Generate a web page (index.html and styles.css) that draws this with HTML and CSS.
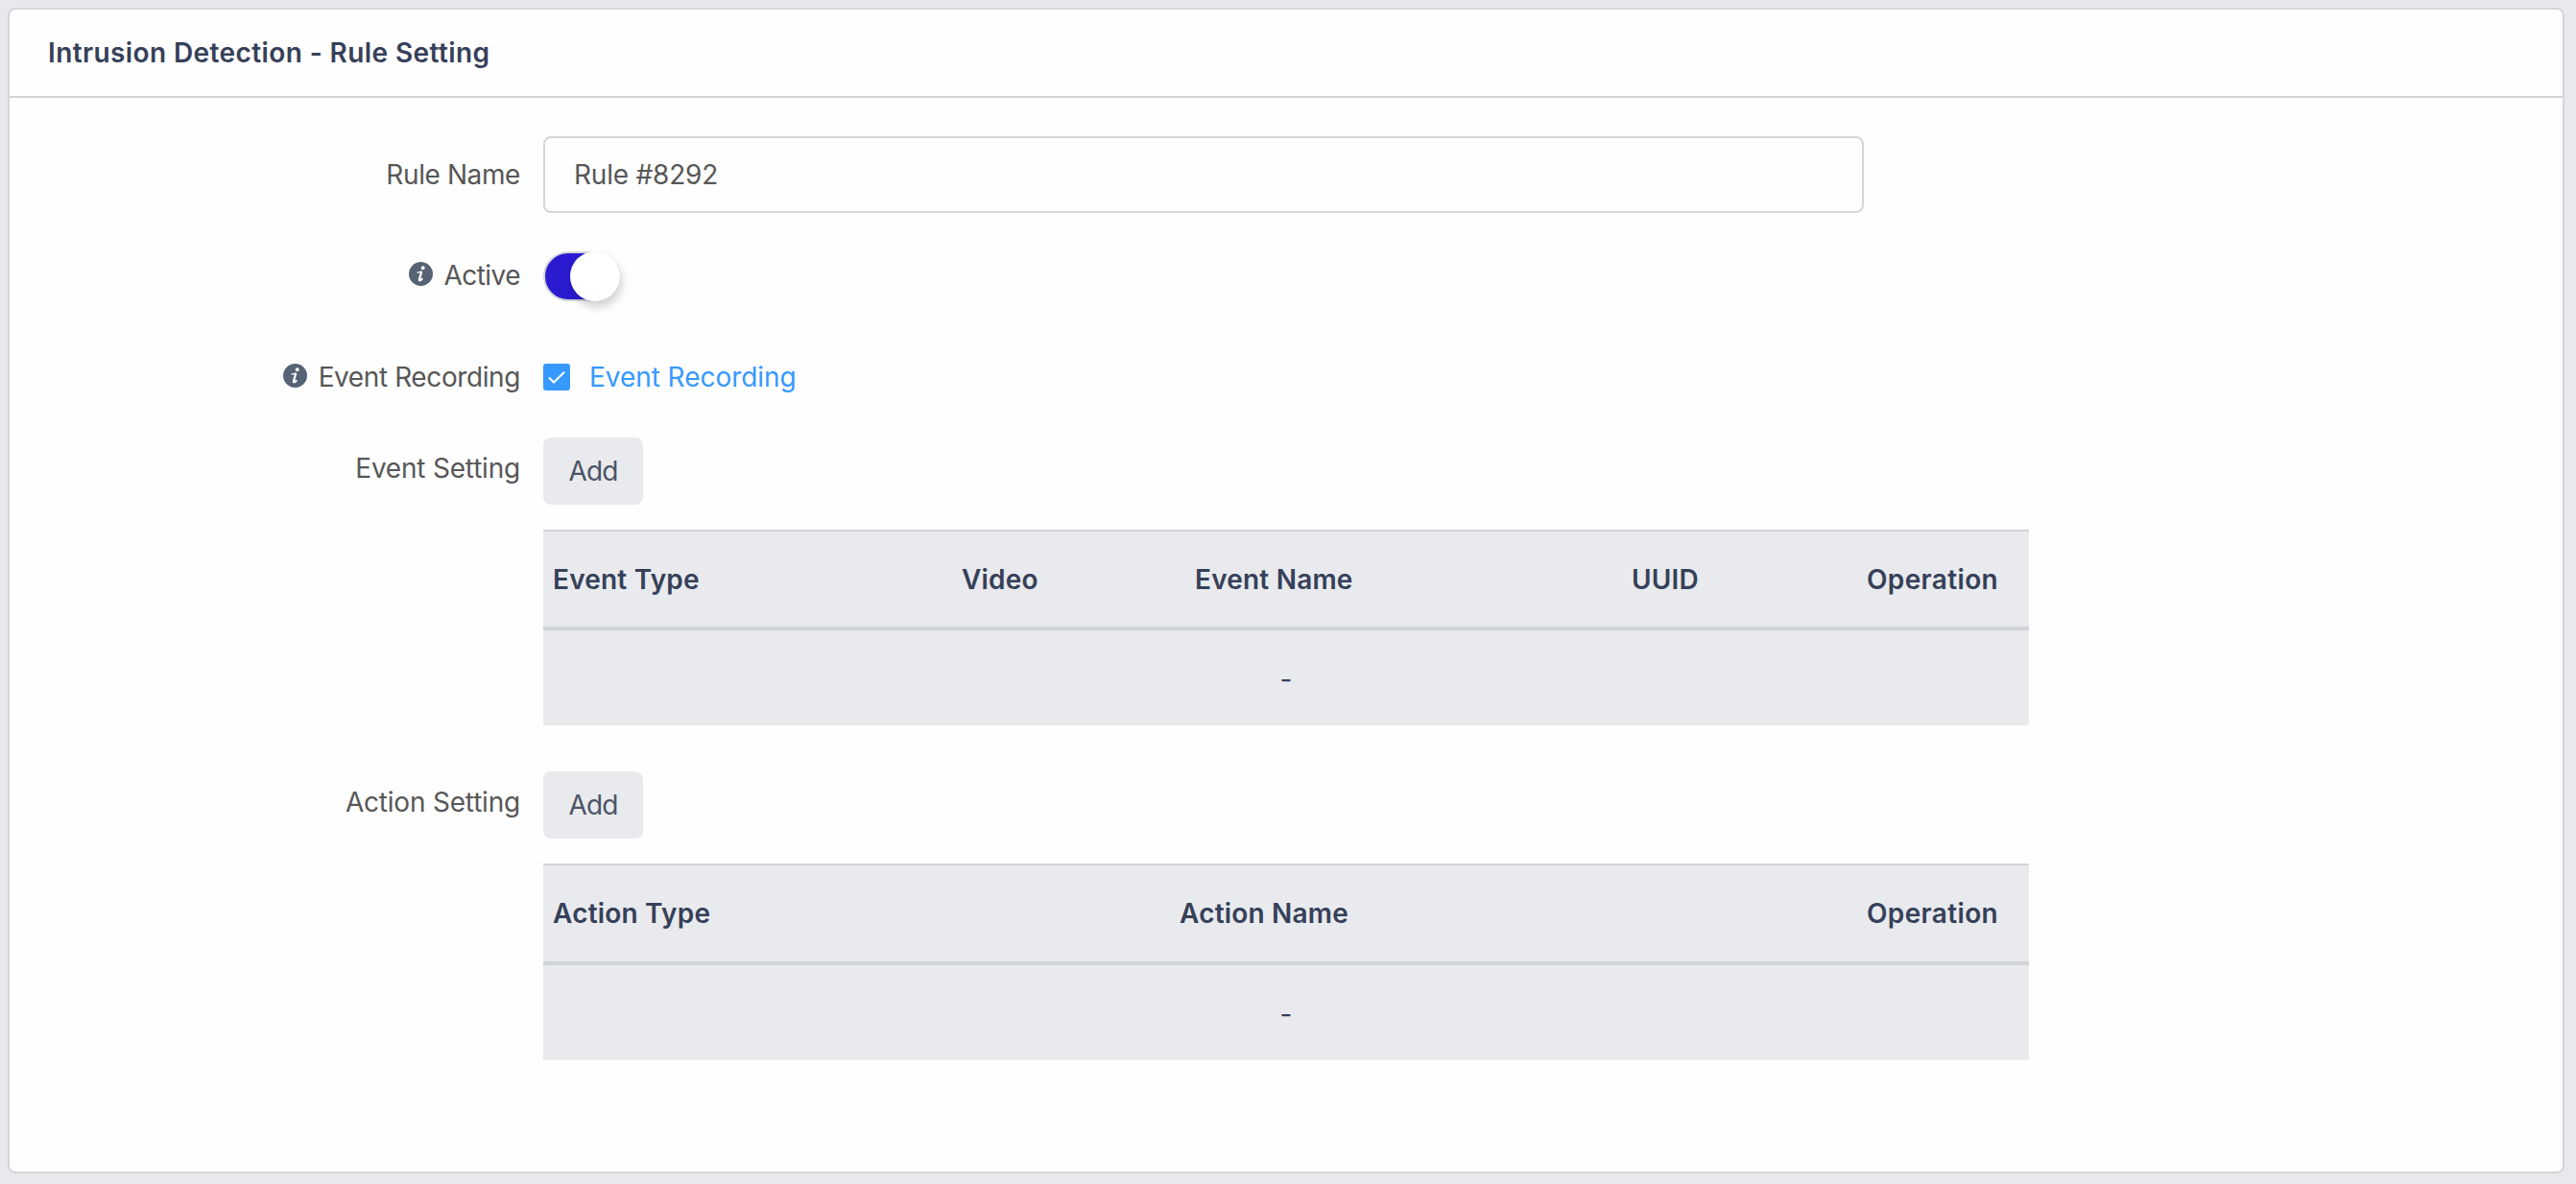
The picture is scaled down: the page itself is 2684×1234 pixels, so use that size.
FILE: index.html
```html
<!DOCTYPE html>
<html lang="en">
<head>
    <meta charset="UTF-8">
    <meta name="viewport" content="width=device-width, initial-scale=1.0">
    <title>Intrusion Detection - Rule Setting</title>
    <link rel="stylesheet" href="styles.css">
</head>
<body>
    <div class="card">
        <div class="card-header">
            <h1 class="card-title">Intrusion Detection - Rule Setting</h1>
        </div>
        <form class="card-body">
            <div class="form-row row-name">
                <label class="form-label" for="ruleName"><span>Rule Name</span></label>
                <input type="text" id="ruleName" class="form-input" value="Rule #8292">
            </div>

            <div class="form-row row-active">
                <div class="form-label">
                    <svg class="info-icon" viewBox="0 0 25 25">
                        <circle cx="12.5" cy="12.5" r="12.5" fill="#566375"/>
                        <circle cx="14.7" cy="6.2" r="1.9" fill="#fff"/>
                        <path d="M8.6 11.2c1.8-.2 3.4-.6 5.1-1.3" fill="none" stroke="#fff" stroke-width="1.2"/>
                        <path d="M13.2 10.2l-2.3 8c-.4 1.7 1.4 1.5 3.2-1.1" fill="none" stroke="#fff" stroke-width="2.2"/>
                    </svg>
                    <span>Active</span>
                </div>
                <label class="switch">
                    <input type="checkbox" checked>
                    <span class="switch-track"></span>
                </label>
            </div>

            <div class="form-row row-recording">
                <div class="form-label">
                    <svg class="info-icon" viewBox="0 0 25 25">
                        <circle cx="12.5" cy="12.5" r="12.5" fill="#566375"/>
                        <circle cx="14.7" cy="6.2" r="1.9" fill="#fff"/>
                        <path d="M8.6 11.2c1.8-.2 3.4-.6 5.1-1.3" fill="none" stroke="#fff" stroke-width="1.2"/>
                        <path d="M13.2 10.2l-2.3 8c-.4 1.7 1.4 1.5 3.2-1.1" fill="none" stroke="#fff" stroke-width="2.2"/>
                    </svg>
                    <span>Event Recording</span>
                </div>
                <label class="checkbox">
                    <svg class="checkbox-box" viewBox="0 0 28 28">
                        <rect width="28" height="28" rx="3" fill="#3699ff"/>
                        <path d="M6 14.5l5 5L22 8.8" fill="none" stroke="#fff" stroke-width="2"/>
                    </svg>
                    <span>Event Recording</span>
                </label>
            </div>

            <div class="form-row row-setting">
                <div class="form-label"><span>Event Setting</span></div>
                <div class="form-field">
                    <button type="button" class="btn">Add</button>
                    <table class="table table-event">
                        <colgroup>
                            <col class="col-type">
                            <col class="col-video">
                            <col class="col-name">
                            <col class="col-uuid">
                            <col class="col-operation">
                        </colgroup>
                        <thead>
                            <tr>
                                <th>Event Type</th>
                                <th>Video</th>
                                <th>Event Name</th>
                                <th>UUID</th>
                                <th>Operation</th>
                            </tr>
                        </thead>
                        <tbody>
                            <tr><td colspan="5">-</td></tr>
                        </tbody>
                    </table>
                </div>
            </div>

            <div class="form-row row-setting">
                <div class="form-label"><span>Action Setting</span></div>
                <div class="form-field">
                    <button type="button" class="btn">Add</button>
                    <table class="table table-action">
                        <colgroup>
                            <col class="col-type">
                            <col class="col-name">
                            <col class="col-operation">
                        </colgroup>
                        <thead>
                            <tr>
                                <th>Action Type</th>
                                <th>Action Name</th>
                                <th>Operation</th>
                            </tr>
                        </thead>
                        <tbody>
                            <tr><td colspan="3">-</td></tr>
                        </tbody>
                    </table>
                </div>
            </div>
        </form>
    </div>
</body>
</html>
```

FILE: styles.css
```css
* {
    box-sizing: border-box;
}
body {
    margin: 0;
    padding: 8px 12px 11px 8px;
    height: 1234px;
    background-color: #e8e9ec;
    color: #575757;
    font-family: Inter, 'Liberation Sans', sans-serif;
    font-size: 28px;
    line-height: 34px;
}
.card {
    height: 100%;
    background: #fefefe;
    border: 2px solid #d3d5d8;
    border-radius: 8px;
}
.card-header {
    height: 92px;
    padding: 28px 40px;
    border-bottom: 2px solid #d0d3d7;
}
.card-title {
    margin: 0;
    font-size: 28px;
    font-weight: 600;
    line-height: 34px;
    letter-spacing: 0.4px;
    color: #364059;
}
.card-body {
    padding-top: 40px;
}
.form-row {
    display: flex;
    align-items: flex-start;
}
.form-label {
    display: flex;
    justify-content: flex-end;
    flex-shrink: 0;
    gap: 12px;
    width: 532px;
    margin-right: 24px;
    letter-spacing: -0.4px;
}
.info-icon {
    width: 25px;
    height: 25px;
    margin-top: 3px;
}
.row-name {
    height: 120px;
}
.row-name .form-label {
    padding-top: 23px;
}
.form-input {
    width: 1376px;
    height: 80px;
    padding: 0 30px;
    border: 2px solid #d3d6da;
    border-radius: 8px;
    background: #fefefe;
    color: #575757;
    font: inherit;
    letter-spacing: -0.2px;
}
.row-active {
    height: 106px;
}
.row-active .form-label {
    padding-top: 8px;
    letter-spacing: -0.55px;
}
.switch input {
    display: none;
}
.switch-track {
    display: block;
    width: 80px;
    height: 52px;
    border: 2px solid #d3d6da;
    border-radius: 26px;
    background: #2a1bd1;
}
.switch-track::after {
    content: '';
    display: block;
    width: 52px;
    height: 52px;
    margin: -2px 0 0 26px;
    border-radius: 50%;
    background: #fff;
    box-shadow: 2px 6px 10px rgba(0,0,0,0.18);
}
.row-recording {
    height: 88px;
}
.row-recording .form-label {
    padding-top: 8px;
}
.checkbox {
    display: flex;
    gap: 20px;
    padding-top: 8px;
    color: #3699ff;
    letter-spacing: -0.05px;
}
.checkbox-box {
    width: 28px;
    height: 28px;
    margin-top: 3px;
}
.row-setting {
    height: 348px;
}
.row-setting .form-label {
    padding-top: 15px;
    letter-spacing: -0.2px;
}
.btn {
    display: block;
    width: 104px;
    height: 70px;
    margin-bottom: 26px;
    padding: 0;
    border: none;
    border-radius: 8px;
    background: #e8eaed;
    color: #4c5366;
    font: inherit;
    letter-spacing: -0.8px;
}
.table {
    width: 1548px;
    table-layout: fixed;
    border-spacing: 0;
    background: #e8eaed;
    color: #364059;
}
.table th {
    height: 105px;
    padding: 1px 10px 0;
    border-top: 2px solid #d0d3d7;
    border-bottom: 4px solid #d0d3d7;
    text-align: left;
    font-weight: 600;
    letter-spacing: 0.2px;
    white-space: nowrap;
}
.table th:last-child {
    letter-spacing: 0.35px;
}
.table td {
    height: 99px;
    padding: 2px 0 0;
    text-align: center;
}
.table-action th {
    height: 106px;
    padding-top: 0;
}
.table-event .col-type {
    width: 426px;
}
.table-event .col-video {
    width: 243px;
}
.table-event .col-name {
    width: 455px;
}
.table-event .col-uuid {
    width: 245px;
}
.table-action .col-type {
    width: 653px;
}
.table-action .col-name {
    width: 716px;
}
```
